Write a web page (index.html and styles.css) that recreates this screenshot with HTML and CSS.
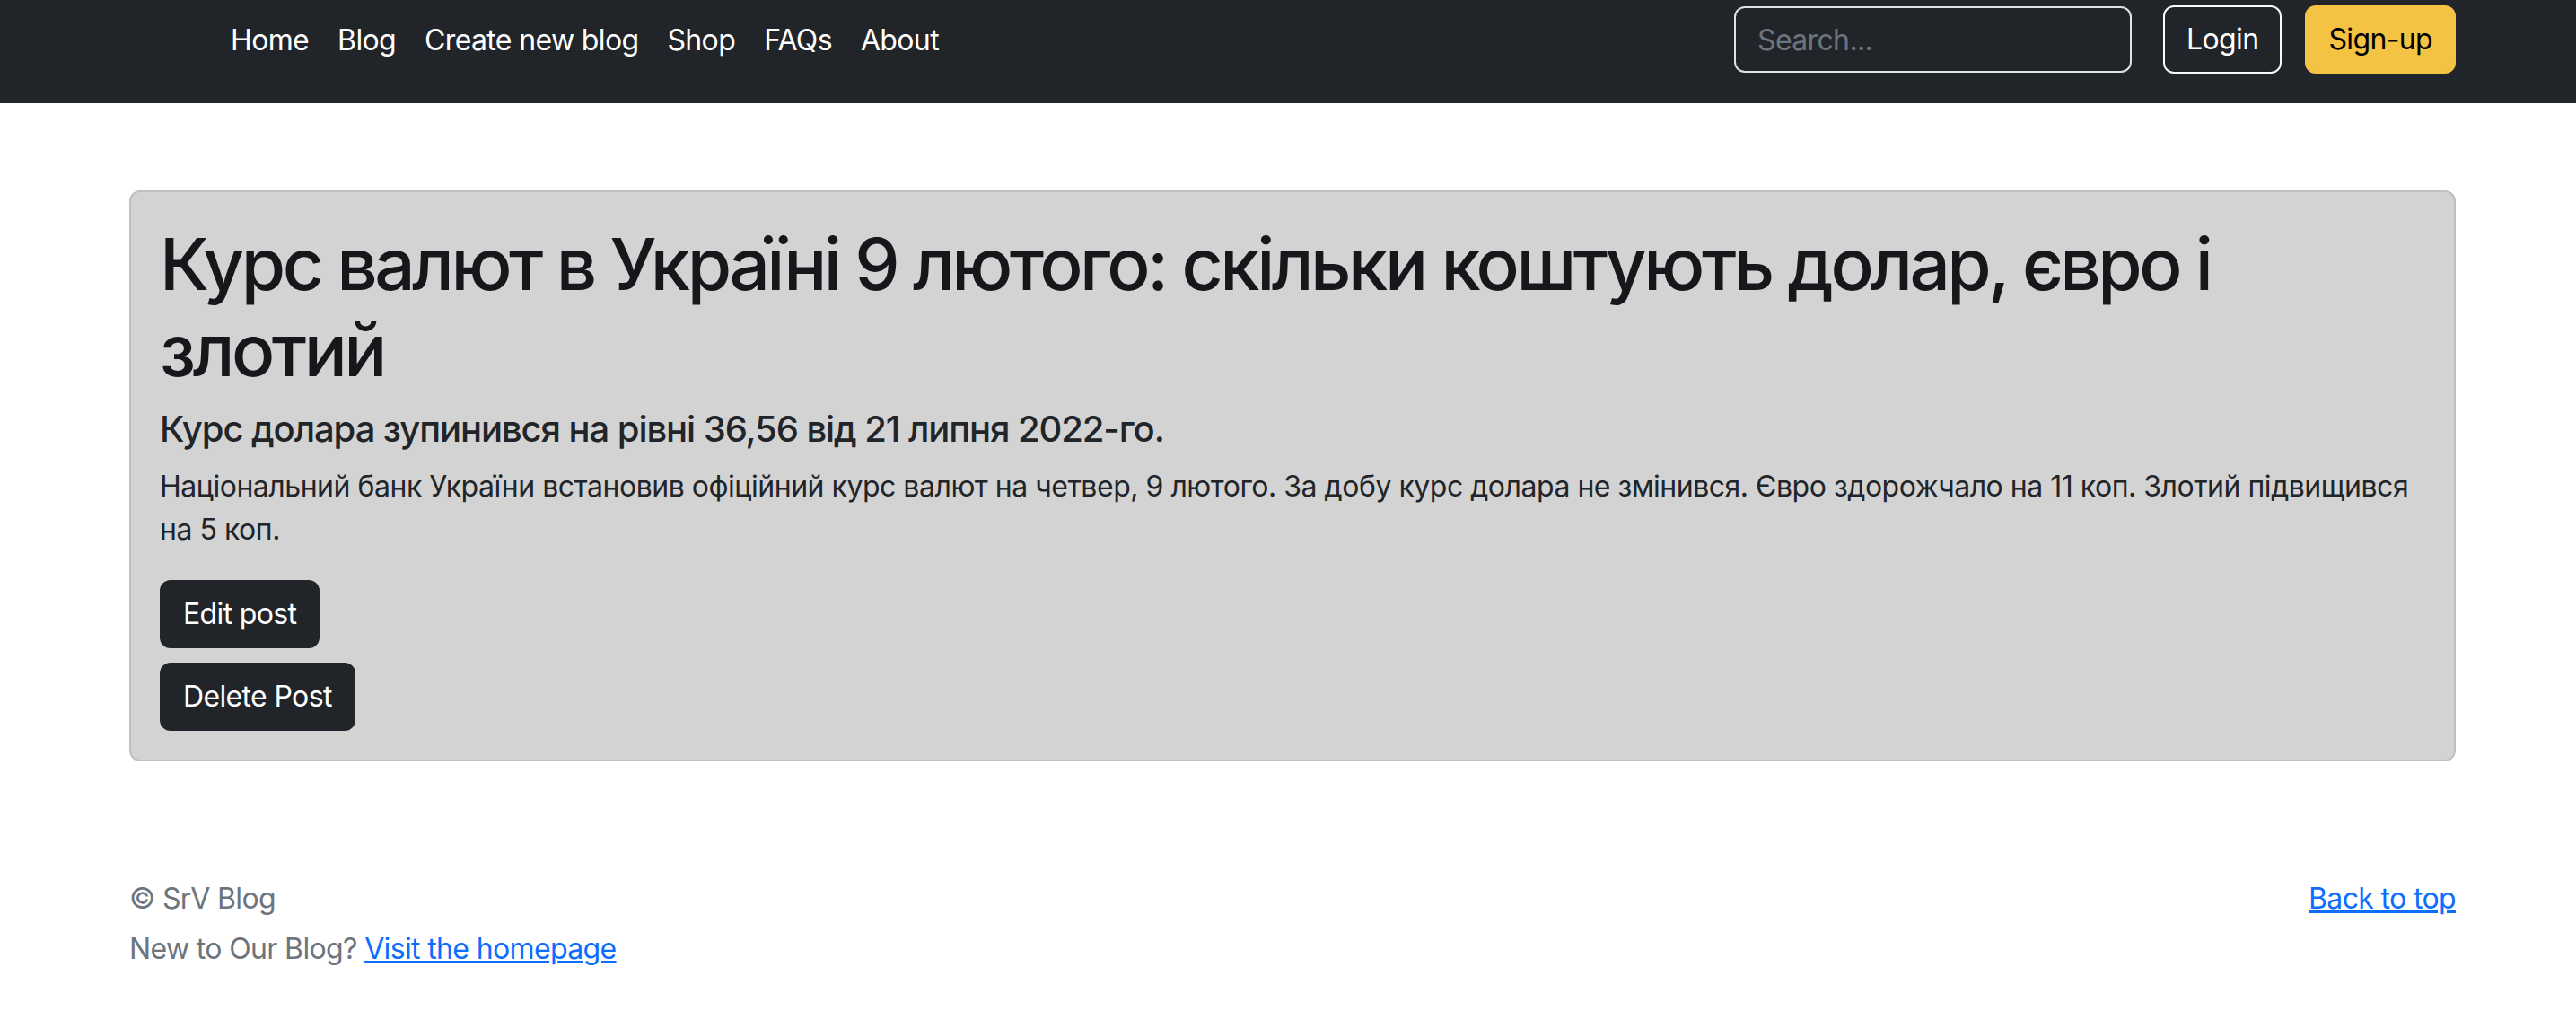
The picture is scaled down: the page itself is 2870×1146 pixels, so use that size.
FILE: index.html
```html
<!DOCTYPE html>
<html lang="uk">
<head>
<meta charset="utf-8">
<title>SrV Blog</title>
<link rel="stylesheet" href="styles.css">
</head>
<body>
<header class="navbar">
  <div class="container nav-row">
    <a class="logo-slot" href="#" aria-label="SrV Blog"></a>
    <ul class="nav">
      <li><a class="nav-link" href="#">Home</a></li>
      <li><a class="nav-link" href="#">Blog</a></li>
      <li><a class="nav-link" href="#">Create new blog</a></li>
      <li><a class="nav-link" href="#">Shop</a></li>
      <li><a class="nav-link" href="#">FAQs</a></li>
      <li><a class="nav-link" href="#">About</a></li>
    </ul>
    <form class="search-form">
      <input class="search-input" type="search" placeholder="Search..." aria-label="Search">
    </form>
    <div class="auth">
      <button type="button" class="btn btn-outline-light">Login</button>
      <button type="button" class="btn btn-warning">Sign-up</button>
    </div>
  </div>
</header>

<main class="container main">
  <article class="post-card">
    <h1 class="post-title">Курс валют в Україні 9 лютого: скільки коштують долар, євро і злотий</h1>
    <h5 class="post-subtitle">Курс долара зупинився на рівні 36,56 від 21 липня 2022-го.</h5>
    <p class="post-body">Національний банк України встановив офіційний курс валют на четвер, 9 лютого. За добу курс долара не змінився. Євро здорожчало на 11 коп. Злотий підвищився на 5 коп.</p>
    <div class="post-actions">
      <a class="btn btn-dark" href="#">Edit post</a>
      <form class="delete-form">
        <button type="button" class="btn btn-dark">Delete Post</button>
      </form>
    </div>
  </article>
</main>

<footer class="footer">
  <div class="container footer-inner">
    <div class="footer-left">
      <p class="footer-line">© SrV Blog</p>
      <p class="footer-line last">New to Our Blog? <a href="#">Visit the homepage</a></p>
    </div>
    <p class="footer-line"><a href="#">Back to top</a></p>
  </div>
</footer>
</body>
</html>
```

FILE: styles.css
```css
* { box-sizing: border-box; }

html, body {
  margin: 0;
  padding: 0;
  background: #ffffff;
}

body {
  font-family: Inter, "Noto Sans", "Liberation Sans", sans-serif;
  font-size: 32px;
  line-height: 1.5;
  letter-spacing: -0.02em;
  color: #212529;
}

.container {
  padding-left: 144px;
  padding-right: 134px;
}

/* ---------- header ---------- */
.navbar {
  background: #212529;
  height: 115px;
  padding-top: 6px;
}

.nav-row {
  display: flex;
  align-items: center;
  height: 76px;
}

.logo-slot {
  display: block;
  width: 80px;
  height: 64px;
  margin-right: 17px;
}

.nav {
  display: flex;
  list-style: none;
  margin: 0 auto 0 0;
  padding: 0;
}

.nav-link {
  display: block;
  padding: 2px 16px 0;
  color: #ffffff;
  text-decoration: none;
  font-size: 32px;
  line-height: 48px;
}

.search-form {
  margin: 0 35px 0 0;
}

.search-input {
  display: block;
  width: 443px;
  height: 74px;
  padding: 0 24px;
  font-family: inherit;
  font-size: 32px;
  letter-spacing: -0.02em;
  color: #ffffff;
  background: #212529;
  border: 2px solid #dee2e6;
  border-radius: 12px;
  outline: none;
}

.search-input::placeholder {
  color: #6c757d;
  opacity: 1;
}

.auth {
  display: flex;
  align-items: center;
  gap: 26px;
}

/* ---------- buttons ---------- */
.btn {
  display: inline-block;
  padding: 12px 24px;
  font-family: inherit;
  font-size: 32px;
  font-weight: 400;
  line-height: 48px;
  letter-spacing: -0.02em;
  border: 2px solid transparent;
  border-radius: 12px;
  text-decoration: none;
  cursor: pointer;
}

.btn-outline-light {
  color: #ffffff;
  background: transparent;
  border-color: #f8f9fa;
}

.btn-warning {
  color: #000000;
  background: #f4c343;
  border-color: #f4c343;
}

.btn-dark {
  color: #ffffff;
  background: #212529;
  border-color: #212529;
}

/* ---------- main ---------- */
.main {
  padding-top: 97px;
  padding-bottom: 32px;
}

.post-card {
  background: #d3d3d3;
  border: 2px solid #bfbfbf;
  border-radius: 12px;
  padding: 32px;
}

.post-title {
  margin: 0 0 16px;
  font-size: 80px;
  font-weight: 500;
  line-height: 1.2;
  letter-spacing: -0.044em;
  color: #16171a;
}

.post-subtitle {
  margin: 0 0 16px;
  font-size: 40px;
  font-weight: 500;
  line-height: 1.2;
  letter-spacing: -0.027em;
}

.post-body {
  margin: 0 0 32px;
  letter-spacing: -0.015em;
}

.post-actions {
  display: flex;
  flex-direction: column;
  align-items: flex-start;
  gap: 16px;
}

.delete-form {
  margin: 0;
}

/* ---------- footer ---------- */
.footer {
  padding: 97px 0 96px;
  color: #6c757d;
}

.footer-inner {
  display: flex;
  justify-content: space-between;
  align-items: flex-start;
}

.footer-line {
  margin: 0 0 8px;
}

.footer-line.last {
  margin-bottom: 0;
}

.footer a {
  color: #0d6efd;
  text-decoration: underline;
}
```
